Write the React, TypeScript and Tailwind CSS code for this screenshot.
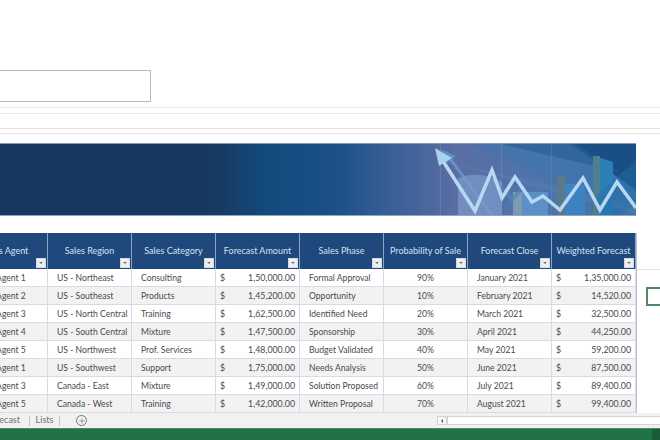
import { Plus } from 'lucide-react';

const columns = [
  'Sales Agent',
  'Sales Region',
  'Sales Category',
  'Forecast Amount',
  'Sales Phase',
  'Probability of Sale',
  'Forecast Close',
  'Weighted Forecast',
];

const rows = [
  ['Sales Agent 1', 'US - Northeast', 'Consulting', '1,50,000.00', 'Formal Approval', '90%', 'January 2021', '1,35,000.00'],
  ['Sales Agent 2', 'US - Southeast', 'Products', '1,45,200.00', 'Opportunity', '10%', 'February 2021', '14,520.00'],
  ['Sales Agent 3', 'US - North Central', 'Training', '1,62,500.00', 'Identified Need', '20%', 'March 2021', '32,500.00'],
  ['Sales Agent 4', 'US - South Central', 'Mixture', '1,47,500.00', 'Sponsorship', '30%', 'April 2021', '44,250.00'],
  ['Sales Agent 5', 'US - Northwest', 'Prof. Services', '1,48,000.00', 'Budget Validated', '40%', 'May 2021', '59,200.00'],
  ['Sales Agent 1', 'US - Southwest', 'Support', '1,75,000.00', 'Needs Analysis', '50%', 'June 2021', '87,500.00'],
  ['Sales Agent 3', 'Canada - East', 'Mixture', '1,49,000.00', 'Solution Proposed', '60%', 'July 2021', '89,400.00'],
  ['Sales Agent 5', 'Canada - West', 'Training', '1,42,000.00', 'Written Proposal', '70%', 'August 2021', '99,400.00'],
];

const Banner = () => (
  <svg width="636" height="73" viewBox="0 143 636 73" className="block shrink-0">
    <defs>
      <linearGradient id="bannerBg" x1="0" y1="0" x2="1" y2="0">
        <stop offset="0" stopColor="#17375e" />
        <stop offset="0.33" stopColor="#17385f" />
        <stop offset="0.42" stopColor="#134a7c" />
        <stop offset="0.53" stopColor="#1c5088" />
        <stop offset="0.63" stopColor="#3f6199" />
        <stop offset="0.72" stopColor="#5a6ea3" />
        <stop offset="0.85" stopColor="#4d74ab" />
        <stop offset="1" stopColor="#3b72a8" />
      </linearGradient>
    </defs>
    <rect x="0" y="143" width="636" height="73" fill="url(#bannerBg)" />
    <rect x="0" y="143" width="636" height="1" fill="#7f9ab5" />
    <rect x="0" y="215" width="636" height="1" fill="#8fa6bd" />
    {/* rays, top right */}
    <path d="M470 144 L560 144 L636 195 L636 215 Z" fill="#3f75ad" opacity="0.55" />
    <path d="M570 144 L636 144 L636 190 Z" fill="#1a4f85" />
    <path d="M500 144 L575 144 L620 172 Z" fill="#2a5f99" opacity="0.7" />
    <path d="M440 160 L636 215 L636 205 Z" fill="#7d9cc9" opacity="0.15" />
    <rect x="440" y="144" width="1" height="71" fill="#8aa3cc" opacity="0.3" />
    <rect x="501" y="144" width="1" height="71" fill="#8aa3cc" opacity="0.3" />
    <rect x="551" y="144" width="1" height="71" fill="#8aa3cc" opacity="0.2" />
    {/* bars */}
    <path d="M458 215 L458 178 Q480 170 502 182 L502 215 Z" fill="#7f9acb" opacity="0.7" />
    <rect x="513" y="192" width="35" height="23" fill="#5a8fc8" />
    <rect x="513" y="192" width="9" height="23" fill="#7d9bb0" />
    <rect x="557" y="176" width="8" height="39" fill="#5b7a88" />
    <rect x="565" y="184" width="20" height="31" fill="#3f82c0" />
    <rect x="593" y="156" width="7" height="59" fill="#4f7f8f" />
    <path d="M600 158 L613 162 L613 215 L600 215 Z" fill="#2f7fb7" />
    <path d="M596 196 L636 160 L636 205 L620 215 L600 215 Z" fill="#1f6fa8" opacity="0.45" />
    {/* second, fainter arrow */}
    <path d="M448 156 L492 215" stroke="#6f9fcb" strokeWidth="3" fill="none" opacity="0.7" />
    <path d="M441 149 L456 156 L447 163 Z" fill="#5b8fc0" />
    <path d="M502 186 L512 200 L524 186" stroke="#4d86c2" strokeWidth="4" fill="none" opacity="0.7" />
    {/* main arrow */}
    <path
      d="M441 158 L475 211 L492 170 L502 198 L515 177 L532 202 L543 196 L560 210 L583 178 L600 210 L617 182 L636 208"
      stroke="#b7d8f2"
      strokeWidth="3.5"
      fill="none"
      strokeLinejoin="miter"
    />
    <path d="M435 148 L452 158 L439 166 Z" fill="#a9d2f0" />
  </svg>
);

const FilterButton = () => (
  <span className="absolute right-[1px] bottom-[1px] flex h-[10px] w-[10px] items-center justify-center border border-[#d5d9e0] bg-[#eceef2]">
    <span className="h-0 w-0 border-x-[2px] border-t-[2px] border-x-transparent border-t-[#777777]" />
  </span>
);

const Cell = ({ value, col }: { value: string; col: number }) => {
  const isMoney = col === 3 || col === 7;
  if (isMoney) {
    return (
      <div className="flex items-center justify-between border-r border-b border-[#d8dae8] pl-[4px] pr-[4px] pt-[1px] text-[8.8px]">
        <span>$</span>
        <span>{value}</span>
      </div>
    );
  }
  return (
    <div
      className={
        'flex items-center overflow-hidden whitespace-nowrap border-r border-b border-[#d8dae8] pt-[1px] ' +
        (col === 5 ? 'justify-center' : col === 0 ? 'pl-[11px]' : 'pl-[9px]')
      }
    >
      {value}
    </div>
  );
};

export default function App() {
  return (
    <div className="flex h-[440px] w-[660px] flex-col overflow-hidden bg-white font-['Lato','Liberation_Sans',sans-serif] text-[8.6px] text-[#4a4a4a]">
      {/* header box and empty rows */}
      <div className="mt-[70px] h-[32px] w-[151px] shrink-0 border-y border-r border-[#bcbcbc]" />
      <div className="mt-[5px] h-[7px] shrink-0 border-y border-[#e6e6e6]" />
      <div className="mt-[14px] h-[6px] shrink-0 border-y border-[#e2e2e2]" />

      <div className="mt-[9px] shrink-0">
        <Banner />
      </div>

      {/* table */}
      <div className="mt-[17px] flex shrink-0">
        <div className="ml-[-36px] w-[673px] shrink-0 border-r border-[#b9c3d3]">
          <div className="grid h-[36px] grid-cols-[repeat(8,84px)] bg-[#1f497d] text-[9px] text-[#d5e0ee]">
            {columns.map((name) => (
              <div key={name} className="relative flex items-center justify-center whitespace-nowrap border-r border-[#8ea3c0]">
                {name}
                <FilterButton />
              </div>
            ))}
          </div>
          {rows.map((row, i) => (
            <div
              key={i}
              className={'grid h-[18px] grid-cols-[repeat(8,84px)] ' + (i % 2 === 1 ? 'bg-[#f2f2f2]' : 'bg-white')}
            >
              {row.map((value, col) => (
                <Cell key={col} value={value} col={col} />
              ))}
            </div>
          ))}
        </div>
        {/* empty cells beside the table, one of them selected */}
        <div className="flex flex-1 flex-col pt-[36px]">
          <div className="h-[18px] border-t border-[#e4e4e4]" />
          <div className="ml-[9px] h-[19px] w-[20px] border-2 border-[#4f8a66]" />
        </div>
      </div>

      {/* sheet tabs */}
      <div className="flex h-[15px] shrink-0 items-center bg-[#f1f1f1] text-[9px] text-[#707070]">
        <div className="ml-[-14px] w-[43px] pb-[2px] pr-[9px] text-right">Forecast</div>
        <div className="h-[10px] border-l border-[#c4c4c4]" />
        <div className="w-[29px] pb-[2px] text-center">Lists</div>
        <div className="h-[10px] border-l border-[#c4c4c4]" />
        <span className="ml-[16px] flex h-[11px] w-[11px] items-center justify-center rounded-full border border-[#777777]">
          <Plus size={8} strokeWidth={1.5} className="text-[#555555]" />
        </span>
        <div className="ml-[350px] flex h-[9px] w-[10px] items-center justify-center border border-[#d4d4d4] bg-[#f7f7f7]">
          <span className="h-0 w-0 border-y-[2px] border-r-[2px] border-y-transparent border-r-[#555555]" />
        </div>
        <div className="h-[9px] flex-1 border-y border-l border-[#d4d4d4] bg-white" />
      </div>

      {/* status bar */}
      <div className="flex flex-1 justify-end border-t border-[#4a8a66] bg-[#217346]">
        <div className="w-[8px] bg-[#1a5c38]" />
      </div>
    </div>
  );
}
